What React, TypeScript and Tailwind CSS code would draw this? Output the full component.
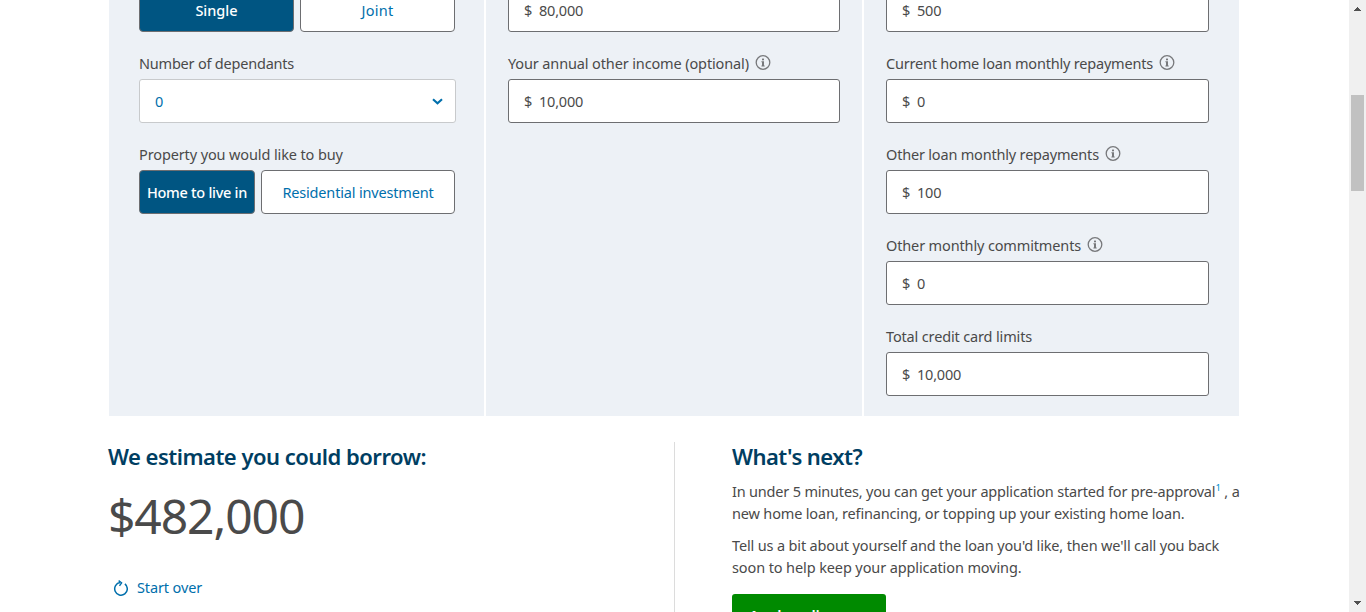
import type { ReactNode } from "react";

function InfoIcon() {
  return (
    <svg className="ml-[6px] h-[16px] w-[16px] shrink-0" viewBox="0 0 16 16" fill="none">
      <circle cx="8" cy="7.5" r="6.8" stroke="#77787b" strokeWidth="1.3" />
      <rect x="7" y="3.6" width="2" height="1.7" fill="#77787b" />
      <path d="M6.4 6.3H9v4.2h.7v.9H6.4v-.9H7V7.2h-.6z" fill="#77787b" />
    </svg>
  );
}

function Field({ label, tracking = "", info, children }: { label: string; tracking?: string; info?: boolean; children: ReactNode }) {
  return (
    <div className="h-[91px]">
      <div className="flex h-[47px] items-center pt-[14px]">
        <label className={tracking}>{label}</label>
        {info && <InfoIcon />}
      </div>
      {children}
    </div>
  );
}

function MoneyBox({ value }: { value: string }) {
  return (
    <div className="flex h-11 items-center rounded-[3px] border border-[#6d6e71] bg-white pl-[15px] tracking-[-0.2px]">
      <span className="w-[15px]">$</span>
      <span>{value}</span>
    </div>
  );
}

function Choice({ selected, className, children }: { selected?: boolean; className: string; children: ReactNode }) {
  const look = selected ? "bg-[#005582] font-medium text-white" : "bg-white text-[#006fac]";
  return (
    <button className={`h-11 whitespace-nowrap rounded-[4px] border border-[#6d6e71] text-center ${look} ${className}`}>
      {children}
    </button>
  );
}

function Scrollbar() {
  return (
    <div className="flex h-full w-[17px] flex-col items-center justify-between bg-[#f0f0f0]">
      <svg className="h-[17px] w-[17px]" viewBox="0 0 17 17" shapeRendering="crispEdges">
        <path d="M5 11v-1h1V9h1V8h1V7h1v1h1v1h1v1h1v1z" fill="#505050" />
      </svg>
      <div className="mt-[78px] mb-auto h-24 w-[13px] bg-[#c1c1c1]" />
      <svg className="h-[17px] w-[17px]" viewBox="0 0 17 17" shapeRendering="crispEdges">
        <path d="M5 6h7v1h-1v1h-1v1H9v1H8V9H7V8H6V7H5z" fill="#505050" />
      </svg>
    </div>
  );
}

export default function App() {
  return (
    <div className="flex h-[612px] w-[1366px] overflow-hidden bg-white font-['Noto_Sans','Open_Sans',sans-serif] text-[14.5px] leading-[22px] tracking-[-0.15px] text-[#4a4a4a]">
      <main className="flex-1 overflow-hidden">
        <div className="-mt-[59px] ml-[109px] flex h-[475px] w-[1130px] gap-[2px]">
          <section className="w-[375px] bg-[#edf1f6] pl-[30px]">
            <Field label="Application type">
              <div className="flex gap-[6px]">
                <Choice selected className="w-[155px] tracking-normal">Single</Choice>
                <Choice className="w-[155px] tracking-[0.3px]">Joint</Choice>
              </div>
            </Field>
            <Field label="Number of dependants" tracking="tracking-[-0.21px]">
              <div className="flex h-11 w-[317px] items-center justify-between rounded-[3px] border border-[#c8cacc] bg-white pr-[12px] pl-[15px] text-[#006fac]">
                <span>0</span>
                <svg className="mt-[1px] h-[7px] w-[11px]" viewBox="0 0 11 7" fill="none">
                  <path d="M1 1.2l4.5 4.1L10 1.2" stroke="#006fac" strokeWidth="2.1" />
                </svg>
              </div>
            </Field>
            <Field label="Property you would like to buy" tracking="tracking-[-0.12px]">
              <div className="flex gap-[6px]">
                <Choice selected className="w-[116px] tracking-[-0.28px]">Home to live in</Choice>
                <Choice className="w-[194px] tracking-[-0.17px]">Residential investment</Choice>
              </div>
            </Field>
          </section>
          <section className="w-[376px] bg-[#edf1f6] pr-[22px] pl-[22px]">
            <Field label="Your annual income"><MoneyBox value="80,000" /></Field>
            <Field label="Your annual other income (optional)" tracking="tracking-[-0.13px]" info><MoneyBox value="10,000" /></Field>
          </section>
          <section className="w-[375px] bg-[#edf1f6] pr-[30px] pl-[22px]">
            <Field label="Monthly living expenses"><MoneyBox value="500" /></Field>
            <Field label="Current home loan monthly repayments" tracking="tracking-[-0.2px]" info><MoneyBox value="0" /></Field>
            <Field label="Other loan monthly repayments" tracking="tracking-[-0.19px]" info><MoneyBox value="100" /></Field>
            <Field label="Other monthly commitments" tracking="tracking-[-0.14px]" info><MoneyBox value="0" /></Field>
            <Field label="Total credit card limits"><MoneyBox value="10,000" /></Field>
          </section>
        </div>

        <div className="mt-[26px] ml-[108px] flex">
          <section className="h-[200px] w-[567px] border-r border-[#dcdcdc]">
            <h2 className="text-[22px] leading-[28px] font-semibold tracking-[-0.51px] text-[#003e62]">We estimate you could borrow:</h2>
            <p className="mt-[13px] text-[48px] leading-[66px] tracking-[-1.1px]">$482,000</p>
            <a className="mt-[27px] ml-[5px] flex items-center text-[#006fac]">
              <svg className="mt-[2px] h-4 w-[15px]" viewBox="0 0 15 16" fill="none" stroke="#006fac">
                <path d="M11.9 3.9A6.3 6.3 0 1 1 7.2 2.6" strokeWidth="1.5" />
                <path d="M5.6 0.6L8.6 2.8L6.5 5.9" strokeWidth="1.4" />
              </svg>
              <span className="ml-[9px] tracking-[-0.13px]">Start over</span>
            </a>
          </section>
          <section className="ml-[57px] whitespace-nowrap">
            <h2 className="text-[22px] leading-[28px] font-semibold tracking-[-0.54px] text-[#003e62]">What's next?</h2>
            <p className="mt-[10px]">
              <span className="tracking-[-0.19px]">In under 5 minutes, you can get your application started for pre-approval</span>
              <sup className="top-[-6px] text-[9.5px] leading-none text-[#0090d0]">1</sup> , a
              <br />
              <span className="tracking-[-0.165px]">new home loan, refinancing, or topping up your existing home loan.</span>
            </p>
            <p className="mt-[10px] tracking-[-0.15px]">
              Tell us a bit about yourself and the loan you'd like, then we'll call you back
              <br />
              <span className="tracking-[-0.11px]">soon to help keep your application moving.</span>
            </p>
            <button className="mt-[16px] flex h-11 w-[154px] items-center rounded-[3px] bg-[#008a00] pb-[2px] pl-[17px] text-[15px] font-semibold tracking-[-0.2px] text-white">
              Apply online
            </button>
          </section>
        </div>
      </main>
      <Scrollbar />
    </div>
  );
}
